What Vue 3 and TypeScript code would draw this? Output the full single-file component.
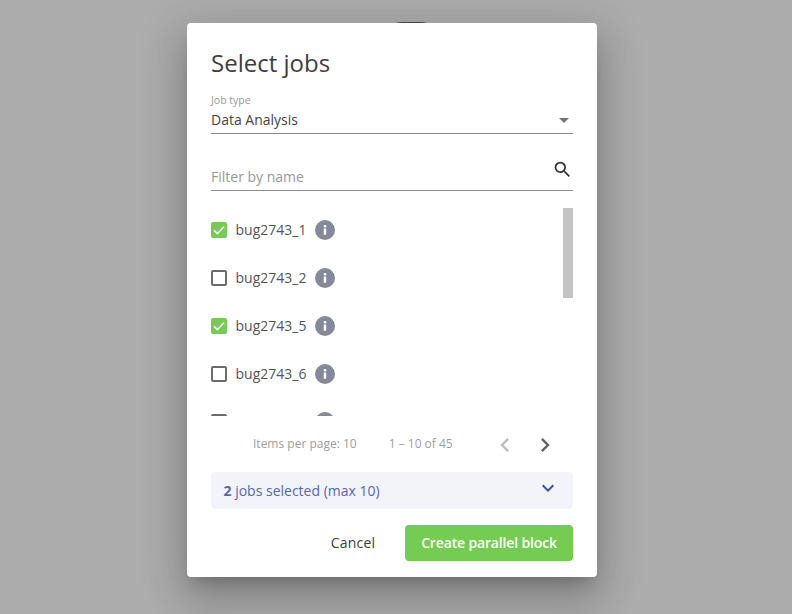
<script setup lang="ts">
interface Job { name: string; checked: boolean }
const jobs: Job[] = [
  { name: 'bug2743_1', checked: true },
  { name: 'bug2743_2', checked: false },
  { name: 'bug2743_5', checked: true },
  { name: 'bug2743_6', checked: false },
  { name: 'bug2743_7', checked: false },
]
</script>

<template>
  <div class="backdrop">
    <div class="peek"></div>
    <section class="modal">
      <h1 class="title">Select jobs</h1>
      <div class="field select">
        <label class="label">Job type</label>
        <div class="value-row">
          <span>Data Analysis</span>
          <span class="caret"></span>
        </div>
      </div>
      <div class="field filter">
        <span class="placeholder">Filter by name</span>
        <svg class="search" width="21" height="21" viewBox="0 0 24 24">
          <path fill="#333" d="M15.5 14h-.79l-.28-.27A6.47 6.47 0 0 0 16 9.5 6.5 6.5 0 1 0 9.5 16c1.61 0 3.09-.59 4.23-1.57l.27.28v.79l5 4.99L20.49 19l-4.99-5zm-6 0C7.01 14 5 11.99 5 9.5S7.01 5 9.5 5 14 7.01 14 9.5 11.99 14 9.5 14z"/>
        </svg>
      </div>
      <div class="list-wrap">
        <ul class="list">
          <li v-for="job in jobs" :key="job.name" class="row">
            <span class="box" :class="{ on: job.checked }">
              <svg v-if="job.checked" width="16" height="16" viewBox="0 0 16 16">
                <path d="M3 8.2l3.4 3.4L13 4.8" fill="none" stroke="#fff" stroke-width="1.5"/>
              </svg>
            </span>
            <span class="name">{{ job.name }}</span>
            <span class="info">
              <svg width="20" height="20" viewBox="0 0 20 20">
                <circle cx="10" cy="10" r="10" fill="#848a9a"/>
                <rect x="8.8" y="8.6" width="2.4" height="6.2" fill="#fff"/>
                <rect x="8.8" y="5.2" width="2.4" height="2.2" fill="#fff"/>
              </svg>
            </span>
          </li>
        </ul>
        <div class="thumb"></div>
      </div>
      <div class="pager">
        <span class="per-page">Items per page: 10</span>
        <span class="range">1 – 10 of 45</span>
        <svg class="prev" width="28" height="28" viewBox="0 0 24 24">
          <path d="M15.41 7.41L14 6l-6 6 6 6 1.41-1.41L10.83 12z" fill="#bdbdbd"/>
        </svg>
        <svg class="next" width="28" height="28" viewBox="0 0 24 24">
          <path d="M10 6L8.59 7.41 13.17 12l-4.58 4.59L10 18l6-6z" fill="#616161"/>
        </svg>
      </div>
      <div class="selected">
        <span><b>2</b> jobs selected (max 10)</span>
        <svg class="chev" width="24" height="24" viewBox="0 0 24 24">
          <path d="M16.59 8.59L12 13.17 7.41 8.59 6 10l6 6 6-6z" fill="#3f51a0"/>
        </svg>
      </div>
      <div class="actions">
        <button class="cancel" type="button">Cancel</button>
        <button class="create" type="button">Create parallel block</button>
      </div>
    </section>
  </div>
</template>

<style scoped>
.backdrop {
  position: relative;
  width: 792px;
  height: 614px;
  background: #acacac;
  display: flex;
  justify-content: center;
  align-items: flex-start;
  padding-top: 23px;
  box-sizing: border-box;
  overflow: hidden;
  font-family: "Open Sans", sans-serif;
  color: #444;
}
.peek {
  position: absolute;
  left: 393px;
  top: 22px;
  width: 37px;
  height: 6px;
  border-radius: 10px 10px 0 0 / 3px 3px 0 0;
  background: #4a4a4a;
}
.modal {
  position: relative;
  width: 410px;
  height: 554px;
  margin-right: 8px;
  box-sizing: border-box;
  padding: 24px 24px 16px;
  background: #fff;
  border-radius: 4px;
  box-shadow: 0 11px 15px -7px rgba(0,0,0,.2), 0 24px 38px 3px rgba(0,0,0,.14), 0 9px 46px 8px rgba(0,0,0,.12);
  display: flex;
  flex-direction: column;
}
.title {
  margin: 0;
  font-size: 24px;
  line-height: 32px;
  font-weight: 400;
  color: #3d3d3d;
}
.field {
  box-sizing: border-box;
  border-bottom: 1px solid #8c8c8c;
}
.select {
  margin-top: 15px;
  height: 40px;
}
.label {
  display: block;
  font-size: 10.5px;
  line-height: 12px;
  color: #999;
}
.value-row {
  display: flex;
  justify-content: space-between;
  align-items: center;
  font-size: 14px;
  line-height: 22px;
  margin-top: 3px;
  padding-right: 4px;
}
.caret {
  width: 0;
  height: 0;
  border-left: 5px solid transparent;
  border-right: 5px solid transparent;
  border-top: 5px solid #757575;
}
.filter {
  margin-top: 24px;
  height: 33px;
  display: flex;
  justify-content: space-between;
  align-items: flex-end;
}
.placeholder {
  font-size: 14px;
  line-height: 22px;
  color: #999;
  padding-bottom: 2px;
}
.search {
  align-self: flex-start;
  margin-top: 1px;
  margin-right: 0;
}
.list-wrap {
  position: relative;
  margin-top: 15px;
  height: 210px;
  overflow: hidden;
}
.list {
  list-style: none;
  margin: 0;
  padding: 0;
}
.row {
  height: 48px;
  display: flex;
  align-items: center;
  font-size: 14px;
}
.box {
  width: 16px;
  height: 16px;
  box-sizing: border-box;
  border: 2px solid #6b6b6b;
  border-radius: 2px;
  display: block;
  position: relative;
}
.box.on {
  border: 0;
  background: #74cc52;
}
.box svg {
  display: block;
}
.name {
  margin-left: 8.5px;
  margin-bottom: 2px;
  color: #555;
}
.info {
  margin-left: 9px;
  width: 20px;
  height: 20px;
}
.info svg {
  display: block;
}
.thumb {
  position: absolute;
  top: 2px;
  right: 0;
  width: 10px;
  height: 90px;
  background: #c4c4c4;
}
.pager {
  height: 56px;
  display: flex;
  align-items: center;
  font-size: 12px;
  color: #9e9e9e;
  padding-left: 42px;
  box-sizing: border-box;
}
.pager span {
  margin-bottom: 2px;
}
.pager svg {
  margin-top: 2px;
}
.range {
  margin-left: 32px;
}
.prev {
  margin-left: 38px;
}
.next {
  margin-left: 12px;
}
.selected {
  height: 37px;
  box-sizing: border-box;
  margin-top: 0;
  padding: 0 13px 0 12.5px;
  background: #f2f4f9;
  border-radius: 4px;
  display: flex;
  justify-content: space-between;
  align-items: center;
  font-size: 14px;
  color: #5568ad;
}
.selected b {
  font-weight: 700;
}
.chev {
  margin-top: -5px;
}
.actions {
  margin-top: 16px;
  display: flex;
  justify-content: flex-end;
  align-items: center;
}
button {
  font-family: inherit;
  font-size: 14px;
  border: 0;
  height: 36px;
  border-radius: 4px;
  padding: 0 0 2px;
}
.cancel {
  background: transparent;
  color: #3d3d3d;
  width: 60px;
  margin-right: 22px;
  letter-spacing: 0.2px;
}
.create {
  width: 168px;
  background: #74cc52;
  color: #fff;
  font-weight: 600;
  letter-spacing: -0.15px;
}
</style>
